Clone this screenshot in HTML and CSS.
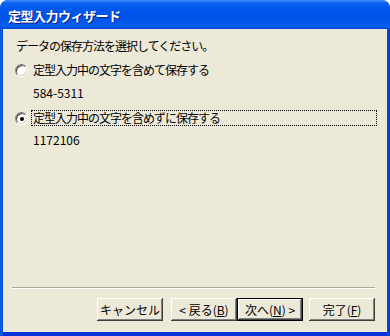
FILE: index.html
```html
<!DOCTYPE html>
<html lang="ja">
<head>
    <meta charset="UTF-8">
    <title>定型入力ウィザード</title>
    <link rel="stylesheet" href="styles.css">
</head>
<body>
    <div class="window">
        <div class="titlebar">
            <span class="title">定型入力ウィザード</span>
        </div>
        <div class="client">
            <p class="prompt">データの保存方法を選択してください。</p>

            <div class="option">
                <span class="radio"></span>
                <span class="label">定型入力中の文字を含めて保存する</span>
            </div>
            <p class="sample">584-5311</p>

            <div class="option selected">
                <span class="radio"></span>
                <span class="label focus">定型入力中の文字を含めずに保存する</span>
            </div>
            <p class="sample last">1172106</p>

            <div class="spacer"></div>
            <div class="separator"></div>

            <div class="buttons">
                <button class="btn">キャンセル</button>
                <button class="btn back">&lt; 戻る(<u>B</u>)</button>
                <button class="btn default">次へ(<u>N</u>) &gt;</button>
                <button class="btn finish">完了(<u>F</u>)</button>
            </div>
        </div>
    </div>
</body>
</html>
```

FILE: styles.css
```css
:root {
    --face: #ece9d8;
    --frame: #0055e5;
    font-family: "Noto Sans CJK JP", "Liberation Sans", sans-serif;
}

body {
    margin: 0;
    background: #ffffff;
}

.window {
    width: 390px;
    height: 336px;
    display: flex;
    flex-direction: column;
    border-radius: 8px 8px 0 0;
    background: linear-gradient(to right, #0045d0 0, #166aee 1px, var(--frame) 2px, var(--frame) 387px, #0040c8 389px);
    overflow: hidden;
}

.titlebar {
    height: 29px;
    flex: none;
    display: flex;
    align-items: center;
    padding-left: 8px;
    border-radius: 8px 8px 0 0;
    background: linear-gradient(to bottom, #3c8dff 0, #0f63f0 3px, #0058ee 8px, #0053e6 16px, #0258ec 22px, #0961f2 26px, #0045d6 29px);
}

.title {
    color: #ffffff;
    font-size: 13px;
    font-weight: bold;
    text-shadow: 1px 1px #0a1e8a;
    letter-spacing: -0.5px;
    margin-top: 1px;
}

.client {
    flex: 1;
    display: flex;
    flex-direction: column;
    margin: 0 3px 4px 3px;
    background: var(--face);
    font-size: 12px;
    color: #000000;
    box-shadow: 0 4px 0 #0831d9;
}

.prompt {
    margin: 9px 0 0 13px;
    height: 16px;
    line-height: 16px;
    letter-spacing: -1px;
}

.option {
    display: flex;
    align-items: center;
    height: 16px;
    margin-top: 8px;
    padding-left: 12px;
}

.option.selected {
    margin-top: 9px;
}

.radio {
    position: relative;
    width: 11px;
    height: 11px;
    flex: none;
    border-radius: 50%;
    border: 1px solid;
    border-color: #808080 #ffffff #ffffff #808080;
    background: #ffffff;
    box-shadow: inset 1px 1px #404040, inset -1px -1px #d4d0c8;
}

.selected .radio::after {
    content: "";
    position: absolute;
    left: 4px;
    top: 4px;
    width: 4px;
    height: 4px;
    border-radius: 50%;
    background: #000000;
}

.label {
    margin-left: 3px;
    padding: 0 1px;
    height: 14px;
    line-height: 14px;
    border: 1px solid transparent;
    flex: 1;
    margin-right: 10px;
    letter-spacing: -1px;
}

.label.focus {
    border: 1px dotted #000000;
}

.sample {
    margin: 7px 0 0 30px;
    height: 16px;
    line-height: 16px;
}

.sample.last {
    margin-top: 6px;
}

.spacer {
    flex: 1;
}

.separator {
    height: 1px;
    margin: 0 12px 0 9px;
    background: #aca899;
    border-bottom: 1px solid #ffffff;
}

.buttons {
    display: flex;
    justify-content: flex-end;
    padding: 9px 12px 11px 0;
}

.btn {
    width: 66px;
    height: 23px;
    padding: 0;
    border: none;
    background: var(--face);
    font-family: inherit;
    font-size: 12px;
    color: #000000;
    box-shadow: inset -1px -1px #404040, inset 1px 1px #ffffff, inset -2px -2px #808080;
}

.btn u {
    text-underline-offset: 1px;
}

.back {
    margin-left: 8px;
}

.default {
    border: 1px solid #000000;
}

.finish {
    margin-left: 6px;
}
```
